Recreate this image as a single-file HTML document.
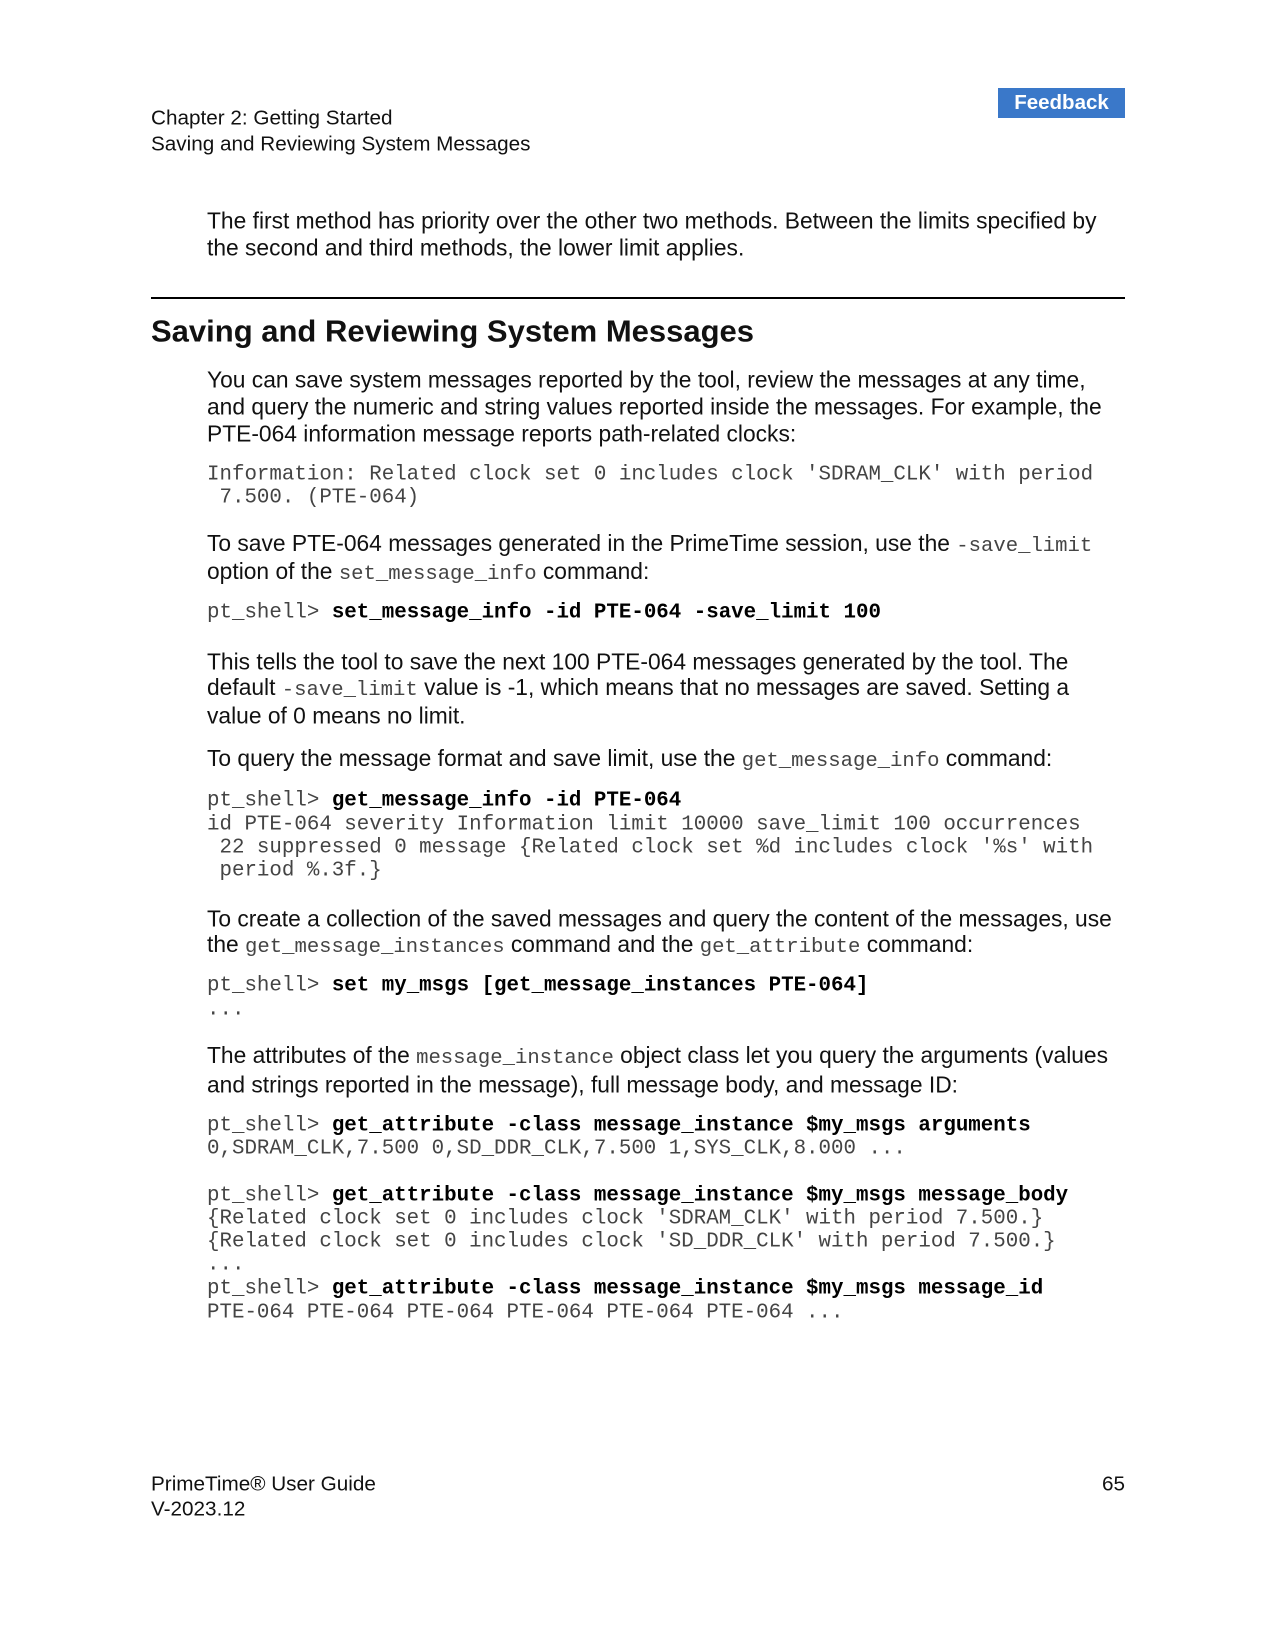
<!DOCTYPE html>
<html><head><meta charset="utf-8"><style>
body{margin:0;background:#fff;width:1275px;height:1650px;position:relative;overflow:hidden;font-family:"Liberation Sans",Arial,sans-serif;color:#111}
.l{position:absolute;white-space:pre;line-height:1;transform:translateY(-50%)}
.t{font-size:22.8px;left:207px}
.c{font-family:"Liberation Mono","Courier New",monospace;font-size:20.8px;left:207px;color:#444}
.c b{color:#000}
.t code{font-family:"Liberation Mono",monospace;font-size:20.6px;color:#444}
.h{font-size:20.7px;left:151px}
</style></head><body>
<div style="position:absolute;left:998px;top:88px;width:127px;height:30px;background:#3a78c9;color:#fff;font-weight:bold;font-size:20.5px;line-height:30px;text-align:center">Feedback</div>
<div class="l h" style="top:119px">Chapter 2: Getting Started</div>
<div class="l h" style="top:145px">Saving and Reviewing System Messages</div>
<div class="l t" style="top:221px">The first method has priority over the other two methods. Between the limits specified by</div>
<div class="l t" style="top:248px">the second and third methods, the lower limit applies.</div>
<div style="position:absolute;left:151px;top:297px;width:974px;height:2px;background:#000"></div>
<div class="l" style="left:151px;top:331px;font-size:31px;font-weight:bold">Saving and Reviewing System Messages</div>
<div class="l t" style="top:380px">You can save system messages reported by the tool, review the messages at any time,</div>
<div class="l t" style="top:407px">and query the numeric and string values reported inside the messages. For example, the</div>
<div class="l t" style="top:434px">PTE-064 information message reports path-related clocks:</div>
<div class="l c" style="top:476px">Information: Related clock set 0 includes clock 'SDRAM_CLK' with period</div>
<div class="l c" style="top:499px"> 7.500. (PTE-064)</div>
<div class="l t" style="top:545px">To save PTE-064 messages generated in the PrimeTime session, use the <code>-save_limit</code></div>
<div class="l t" style="top:573px">option of the <code>set_message_info</code> command:</div>
<div class="l c" style="top:614px">pt_shell&gt; <b>set_message_info -id PTE-064 -save_limit 100</b></div>
<div class="l t" style="top:662px">This tells the tool to save the next 100 PTE-064 messages generated by the tool. The</div>
<div class="l t" style="top:689px">default <code>-save_limit</code> value is -1, which means that no messages are saved. Setting a</div>
<div class="l t" style="top:716px">value of 0 means no limit.</div>
<div class="l t" style="top:760px">To query the message format and save limit, use the <code>get_message_info</code> command:</div>
<div class="l c" style="top:802px">pt_shell&gt; <b>get_message_info -id PTE-064</b></div>
<div class="l c" style="top:826px">id PTE-064 severity Information limit 10000 save_limit 100 occurrences</div>
<div class="l c" style="top:849px"> 22 suppressed 0 message {Related clock set %d includes clock '%s' with</div>
<div class="l c" style="top:872px"> period %.3f.}</div>
<div class="l t" style="top:919px">To create a collection of the saved messages and query the content of the messages, use</div>
<div class="l t" style="top:946px">the <code>get_message_instances</code> command and the <code>get_attribute</code> command:</div>
<div class="l c" style="top:987px">pt_shell&gt; <b>set my_msgs [get_message_instances PTE-064]</b></div>
<div class="l c" style="top:1011px">...</div>
<div class="l t" style="top:1057px">The attributes of the <code>message_instance</code> object class let you query the arguments (values</div>
<div class="l t" style="top:1085px">and strings reported in the message), full message body, and message ID:</div>
<div class="l c" style="top:1127px">pt_shell&gt; <b>get_attribute -class message_instance $my_msgs arguments</b></div>
<div class="l c" style="top:1150px">0,SDRAM_CLK,7.500 0,SD_DDR_CLK,7.500 1,SYS_CLK,8.000 ...</div>
<div class="l c" style="top:1197px">pt_shell&gt; <b>get_attribute -class message_instance $my_msgs message_body</b></div>
<div class="l c" style="top:1220px">{Related clock set 0 includes clock 'SDRAM_CLK' with period 7.500.}</div>
<div class="l c" style="top:1243px">{Related clock set 0 includes clock 'SD_DDR_CLK' with period 7.500.}</div>
<div class="l c" style="top:1266px">...</div>
<div class="l c" style="top:1290px">pt_shell&gt; <b>get_attribute -class message_instance $my_msgs message_id</b></div>
<div class="l c" style="top:1314px">PTE-064 PTE-064 PTE-064 PTE-064 PTE-064 PTE-064 ...</div>
<div class="l h" style="top:1485px">PrimeTime® User Guide</div>
<div class="l h" style="top:1510px">V-2023.12</div>
<div class="l h" style="top:1485px;left:auto;right:150px">65</div>
</body></html>
